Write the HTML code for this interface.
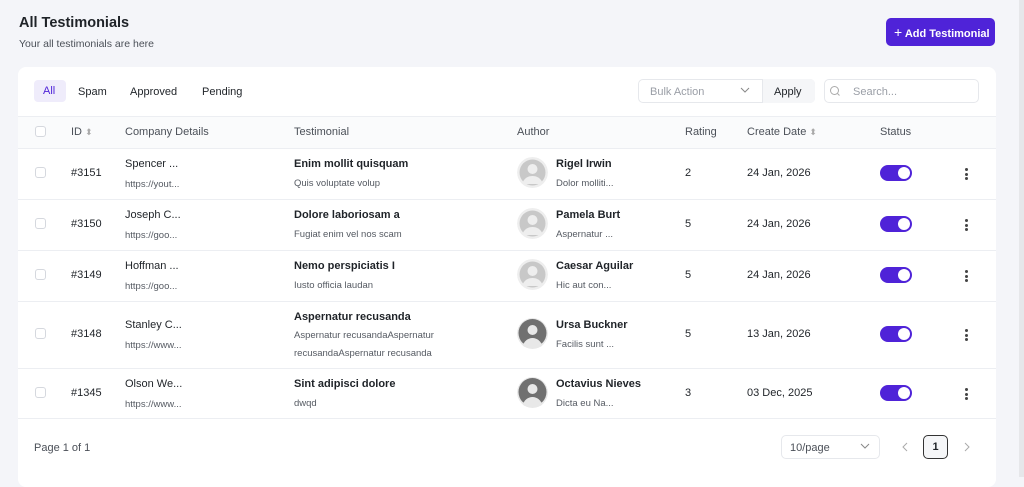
<!DOCTYPE html>
<html><head><meta charset="utf-8"><style>
*{box-sizing:border-box;margin:0;padding:0}
body{width:1024px;height:477px;background:#f4f5f9;font-family:"Liberation Sans",sans-serif;color:#1f2328;position:relative;overflow:hidden}
.a{position:absolute;white-space:nowrap}
.card{position:absolute;left:18px;top:67px;width:978px;height:420px;background:#fff;border-radius:8px}
.line{position:absolute;left:18px;width:978px;height:1px;background:#eceef2}
.cb{position:absolute;left:35px;width:11px;height:11px;border:1px solid #d5d8de;border-radius:3px;background:#fff}
.h{font-size:11px;color:#4b5058;margin-top:1px}
.b{font-size:11px;color:#1f2328;margin-top:1px}
.s{font-size:9.5px;color:#555a62;margin-top:1px}
.bold{font-weight:bold}
.av{position:absolute;left:517px;width:31px;height:31px;border-radius:50%;overflow:hidden}
.tg{position:absolute;left:880px;width:32px;height:16px;border-radius:8px;background:#4f23d8}
.tg:after{content:"";position:absolute;right:2px;top:2px;width:12px;height:12px;border-radius:50%;background:#fff}
.dots{position:absolute;left:965px;width:3px}
.dots i{display:block;width:3px;height:3px;border-radius:50%;background:#444;margin-bottom:1.5px}
</style></head><body>
<div class="a bold" style="left:19px;top:15px;font-size:14.5px">All Testimonials</div>
<div class="a" style="left:19px;top:38px;font-size:10.5px;color:#4b5058">Your all testimonials are here</div>
<div class="a" style="left:886px;top:18px;width:109px;height:28px;background:#4f23d8;border-radius:5px;color:#fff;font-size:11px;font-weight:bold;line-height:28px;padding-left:8px"><span style="font-weight:normal;font-size:14px">+</span> Add Testimonial</div>
<div style="position:absolute;right:0;top:0;width:5px;height:477px;background:#e6e7ea"></div>
<div class="card"></div>
<div class="a" style="left:34px;top:80px;width:32px;height:22px;background:#efecfb;border-radius:4px"></div>
<div class="a" style="left:43px;top:85px;font-size:11px;color:#4f23d8">All</div>
<div class="a b" style="left:78px;top:85px">Spam</div>
<div class="a b" style="left:130px;top:85px">Approved</div>
<div class="a b" style="left:202px;top:85px">Pending</div>
<div class="a" style="left:638px;top:79px;width:177px;height:24px;border:1px solid #e6e8ec;border-radius:5px"></div>
<div class="a" style="left:762px;top:79px;width:53px;height:24px;background:#f5f6f8;border-left:1px solid #e6e8ec;border-radius:0 5px 5px 0"></div>
<div class="a" style="left:650px;top:86px;font-size:11px;color:#9a9ea6">Bulk Action</div>
<svg class="a" style="left:740px;top:87px" width="10" height="7"><path d="M1 1l4 4 4-4" fill="none" stroke="#888" stroke-width="1"/></svg>
<div class="a b" style="left:774px;top:85px">Apply</div>
<div class="a" style="left:824px;top:79px;width:155px;height:24px;border:1px solid #e6e8ec;border-radius:5px"></div>
<svg class="a" style="left:829px;top:85px" width="12" height="12"><circle cx="5.5" cy="5.5" r="4" fill="none" stroke="#aaa"/><path d="M8.5 8.5l2 2" stroke="#aaa"/></svg>
<div class="a" style="left:853px;top:86px;font-size:11px;color:#9a9ea6">Search...</div>
<div class="line" style="top:116px"></div>
<div class="a" style="left:18px;top:117px;width:978px;height:31px;background:#fafbfc"></div>
<div class="cb" style="top:126px"></div>
<div class="a h" style="left:71px;top:125px">ID <span style="color:#aaa;font-size:9px">⬍</span></div>
<div class="a h" style="left:125px;top:125px">Company Details</div>
<div class="a h" style="left:294px;top:125px">Testimonial</div>
<div class="a h" style="left:517px;top:125px">Author</div>
<div class="a h" style="left:685px;top:125px">Rating</div>
<div class="a h" style="left:747px;top:125px">Create Date <span style="color:#aaa;font-size:9px">⬍</span></div>
<div class="a h" style="left:880px;top:125px">Status</div>
<div class="line" style="top:148px"></div>
<div class="line" style="top:199px"></div>
<div class="line" style="top:250px"></div>
<div class="line" style="top:301px"></div>
<div class="line" style="top:368px"></div>
<div class="line" style="top:418px"></div>

<div class="cb" style="top:167px"></div><div class="a b" style="left:71px;top:166px">#3151</div>
<div class="a b" style="left:125px;top:157px">Spencer ...</div><div class="a s" style="left:125px;top:178px">https://yout...</div>
<div class="a b bold" style="left:294px;top:157px">Enim mollit quisquam</div><div class="a s" style="left:294px;top:177px">Quis voluptate volup</div>
<div class="av" style="top:157px"><svg width="31" height="31"><circle cx="15.5" cy="15.5" r="15.5" fill="#eee"/><circle cx="15.5" cy="15.5" r="13" fill="#c8c8c8"/><circle cx="15.5" cy="12" r="5" fill="#eee"/><path d="M5 27c2-6 6-8 10.5-8s8.5 2 10.5 8z" fill="#eee"/></svg></div>
<div class="a b bold" style="left:556px;top:157px">Rigel Irwin</div><div class="a s" style="left:556px;top:177px">Dolor molliti...</div>
<div class="a b" style="left:685px;top:166px">2</div><div class="a b" style="left:747px;top:166px">24 Jan, 2026</div>
<div class="tg" style="top:165px"></div><div class="dots" style="top:168px"><i></i><i></i><i></i></div>

<div class="cb" style="top:218px"></div><div class="a b" style="left:71px;top:217px">#3150</div>
<div class="a b" style="left:125px;top:208px">Joseph C...</div><div class="a s" style="left:125px;top:229px">https://goo...</div>
<div class="a b bold" style="left:294px;top:208px">Dolore laboriosam a</div><div class="a s" style="left:294px;top:228px">Fugiat enim vel nos scam</div>
<div class="av" style="top:208px"><svg width="31" height="31"><circle cx="15.5" cy="15.5" r="15.5" fill="#eee"/><circle cx="15.5" cy="15.5" r="13" fill="#c8c8c8"/><circle cx="15.5" cy="12" r="5" fill="#eee"/><path d="M5 27c2-6 6-8 10.5-8s8.5 2 10.5 8z" fill="#eee"/></svg></div>
<div class="a b bold" style="left:556px;top:208px">Pamela Burt</div><div class="a s" style="left:556px;top:228px">Aspernatur ...</div>
<div class="a b" style="left:685px;top:217px">5</div><div class="a b" style="left:747px;top:217px">24 Jan, 2026</div>
<div class="tg" style="top:216px"></div><div class="dots" style="top:219px"><i></i><i></i><i></i></div>

<div class="cb" style="top:269px"></div><div class="a b" style="left:71px;top:268px">#3149</div>
<div class="a b" style="left:125px;top:259px">Hoffman ...</div><div class="a s" style="left:125px;top:280px">https://goo...</div>
<div class="a b bold" style="left:294px;top:259px">Nemo perspiciatis I</div><div class="a s" style="left:294px;top:279px">Iusto officia laudan</div>
<div class="av" style="top:259px"><svg width="31" height="31"><circle cx="15.5" cy="15.5" r="15.5" fill="#eee"/><circle cx="15.5" cy="15.5" r="13" fill="#c8c8c8"/><circle cx="15.5" cy="12" r="5" fill="#eee"/><path d="M5 27c2-6 6-8 10.5-8s8.5 2 10.5 8z" fill="#eee"/></svg></div>
<div class="a b bold" style="left:556px;top:259px">Caesar Aguilar</div><div class="a s" style="left:556px;top:279px">Hic aut con...</div>
<div class="a b" style="left:685px;top:268px">5</div><div class="a b" style="left:747px;top:268px">24 Jan, 2026</div>
<div class="tg" style="top:267px"></div><div class="dots" style="top:270px"><i></i><i></i><i></i></div>

<div class="cb" style="top:328px"></div><div class="a b" style="left:71px;top:327px">#3148</div>
<div class="a b" style="left:125px;top:318px">Stanley C...</div><div class="a s" style="left:125px;top:339px">https://www...</div>
<div class="a b bold" style="left:294px;top:310px">Aspernatur recusanda</div><div class="a s" style="left:294px;top:329px">Aspernatur recusandaAspernatur</div><div class="a s" style="left:294px;top:347px">recusandaAspernatur recusanda</div>
<div class="av" style="top:318px"><svg width="31" height="31"><circle cx="15.5" cy="15.5" r="15.5" fill="#e8e8e8"/><circle cx="15.5" cy="15" r="14" fill="#707070"/><circle cx="15.5" cy="12" r="5" fill="#e8e8e8"/><path d="M5 29c2-6 6-9 10.5-9s8.5 3 10.5 9z" fill="#e8e8e8"/></svg></div>
<div class="a b bold" style="left:556px;top:318px">Ursa Buckner</div><div class="a s" style="left:556px;top:338px">Facilis sunt ...</div>
<div class="a b" style="left:685px;top:327px">5</div><div class="a b" style="left:747px;top:327px">13 Jan, 2026</div>
<div class="tg" style="top:326px"></div><div class="dots" style="top:329px"><i></i><i></i><i></i></div>

<div class="cb" style="top:387px"></div><div class="a b" style="left:71px;top:386px">#1345</div>
<div class="a b" style="left:125px;top:377px">Olson We...</div><div class="a s" style="left:125px;top:398px">https://www...</div>
<div class="a b bold" style="left:294px;top:377px">Sint adipisci dolore</div><div class="a s" style="left:294px;top:397px">dwqd</div>
<div class="av" style="top:377px"><svg width="31" height="31"><circle cx="15.5" cy="15.5" r="15.5" fill="#e8e8e8"/><circle cx="15.5" cy="15" r="14" fill="#707070"/><circle cx="15.5" cy="12" r="5" fill="#e8e8e8"/><path d="M5 29c2-6 6-9 10.5-9s8.5 3 10.5 9z" fill="#e8e8e8"/></svg></div>
<div class="a b bold" style="left:556px;top:377px">Octavius Nieves</div><div class="a s" style="left:556px;top:397px">Dicta eu Na...</div>
<div class="a b" style="left:685px;top:386px">3</div><div class="a b" style="left:747px;top:386px">03 Dec, 2025</div>
<div class="tg" style="top:385px"></div><div class="dots" style="top:388px"><i></i><i></i><i></i></div>

<div class="a" style="left:34px;top:442px;font-size:11px;color:#4b5058">Page 1 of 1</div>
<div class="a" style="left:781px;top:435px;width:99px;height:24px;border:1px solid #e6e8ec;border-radius:5px"></div>
<div class="a" style="left:790px;top:442px;font-size:11px;color:#4b5058">10/page</div>
<svg class="a" style="left:860px;top:443px" width="10" height="7"><path d="M1 1l4 4 4-4" fill="none" stroke="#888"/></svg>
<svg class="a" style="left:901px;top:442px" width="8" height="10"><path d="M6 1L2 5l4 4" fill="none" stroke="#aaa"/></svg>
<div class="a" style="left:923px;top:435px;width:25px;height:24px;border:1px solid #333;border-radius:5px;background:#f5f6f8;font-size:11px;font-weight:bold;text-align:center;line-height:22px">1</div>
<svg class="a" style="left:963px;top:442px" width="8" height="10"><path d="M2 1l4 4-4 4" fill="none" stroke="#aaa"/></svg>
</body></html>
